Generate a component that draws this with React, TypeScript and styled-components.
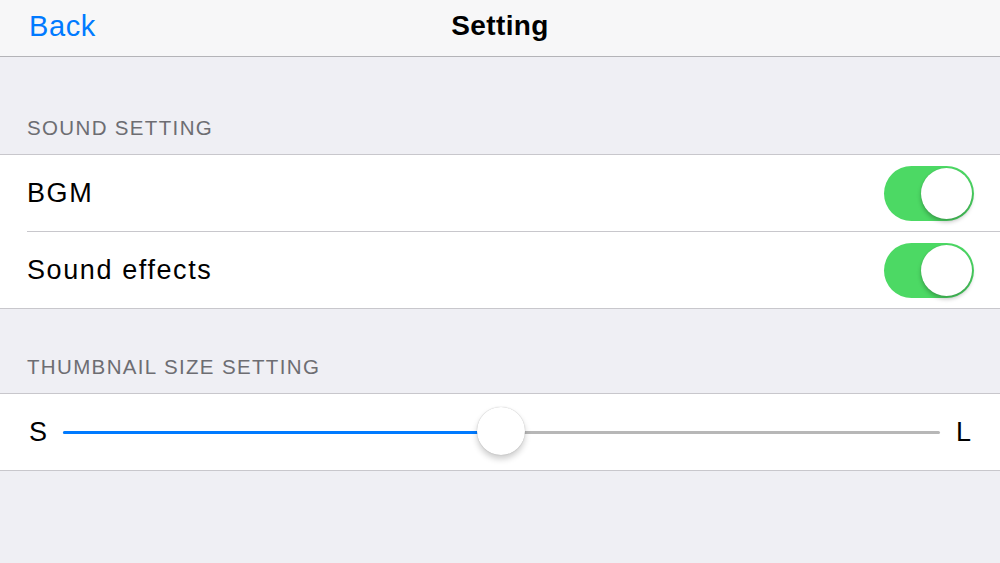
import React from "react";
import styled, { createGlobalStyle } from "styled-components";

const Global = createGlobalStyle`
  html, body { margin: 0; padding: 0; }
  body {
    width: 1000px;
    height: 563px;
    overflow: hidden;
    background: #efeff4;
    font-family: "Liberation Sans", Arial, sans-serif;
    -webkit-font-smoothing: antialiased;
  }
`;

const Page = styled.div`
  width: 1000px;
  height: 563px;
  background: #efeff4;
  display: flex;
  flex-direction: column;
`;

const NavBar = styled.div`
  height: 57px;
  box-sizing: border-box;
  background: #f7f7f8;
  border-bottom: 1px solid #b4b4b8;
  display: grid;
  grid-template-columns: 1fr auto 1fr;
  align-items: center;
  padding: 0 29px;
`;

const BackButton = styled.div`
  color: #007aff;
  font-size: 29px;
  letter-spacing: 0.6px;
  justify-self: start;
  padding-bottom: 4px;
`;

const Title = styled.div`
  color: #000;
  font-size: 28px;
  font-weight: bold;
  letter-spacing: 0.4px;
  padding-bottom: 4px;
`;

const SectionHeader = styled.div<{ $top: number }>`
  padding: ${(p) => p.$top}px 27px 0 27px;
  height: 37px;
  color: #6d6d72;
  font-size: 20.5px;
  letter-spacing: 1.35px;
  line-height: 22px;
`;

const Group = styled.div`
  background: #fff;
  border-top: 1px solid #c8c7cc;
  border-bottom: 1px solid #c8c7cc;
`;

const Row = styled.div<{ $divider?: boolean }>`
  height: 76px;
  display: flex;
  align-items: center;
  justify-content: space-between;
  margin-left: 27px;
  padding-right: 27px;
  border-top: ${(p) => (p.$divider ? "1px solid #c8c7cc" : "none")};
`;

const RowLabel = styled.div`
  font-size: 27px;
  letter-spacing: 1.6px;
  color: #000;
`;

const Toggle = styled.div`
  width: 90px;
  height: 55px;
  border-radius: 28px;
  background: #4cd964;
  position: relative;
  margin-right: -1px;
`;

const Knob = styled.div`
  position: absolute;
  top: 2px;
  right: 2px;
  width: 51px;
  height: 51px;
  border-radius: 50%;
  background: #fff;
  box-shadow: 0 3px 4px rgba(0, 0, 0, 0.25), 0 0 1px rgba(0, 0, 0, 0.15);
`;

const SliderRow = styled.div`
  height: 76px;
  display: flex;
  align-items: center;
  padding: 0 29px 0 29px;
`;

const SliderLabel = styled.div<{ $side: "l" | "r" }>`
  font-size: 27px;
  color: #000;
  width: ${(p) => (p.$side === "l" ? "34px" : "30px")};
  text-align: ${(p) => (p.$side === "l" ? "left" : "right")};
  padding-top: 1px;
`;

const Track = styled.div`
  flex: 1;
  height: 3px;
  background: #b7b7b7;
  border-radius: 2px;
  position: relative;
  margin-right: 1px;
`;

const Fill = styled.div`
  position: absolute;
  left: 0;
  top: 0;
  bottom: 0;
  background: #007aff;
  border-radius: 2px;
`;

const Thumb = styled.div`
  position: absolute;
  top: 50%;
  width: 48px;
  height: 48px;
  margin-left: -24px;
  margin-top: -25px;
  border-radius: 50%;
  background: #fff;
  box-shadow: 0 4px 6px rgba(0, 0, 0, 0.2), 0 0 1px rgba(0, 0, 0, 0.3);
`;

export default function App() {
  const value = 0.5;
  const trackWidth = 877;
  const px = Math.round(value * trackWidth) - 1;
  return (
    <>
      <Global />
      <Page>
        <NavBar>
          <BackButton>Back</BackButton>
          <Title>Setting</Title>
          <div />
        </NavBar>
        <SectionHeader $top={60}>SOUND SETTING</SectionHeader>
        <Group>
          <Row>
            <RowLabel>BGM</RowLabel>
            <Toggle>
              <Knob />
            </Toggle>
          </Row>
          <Row $divider>
            <RowLabel>Sound effects</RowLabel>
            <Toggle>
              <Knob />
            </Toggle>
          </Row>
        </Group>
        <SectionHeader $top={47}>THUMBNAIL SIZE SETTING</SectionHeader>
        <Group>
          <SliderRow>
            <SliderLabel $side="l">S</SliderLabel>
            <Track>
              <Fill style={{ width: px }} />
              <Thumb style={{ left: px }} />
            </Track>
            <SliderLabel $side="r">L</SliderLabel>
          </SliderRow>
        </Group>
      </Page>
    </>
  );
}
